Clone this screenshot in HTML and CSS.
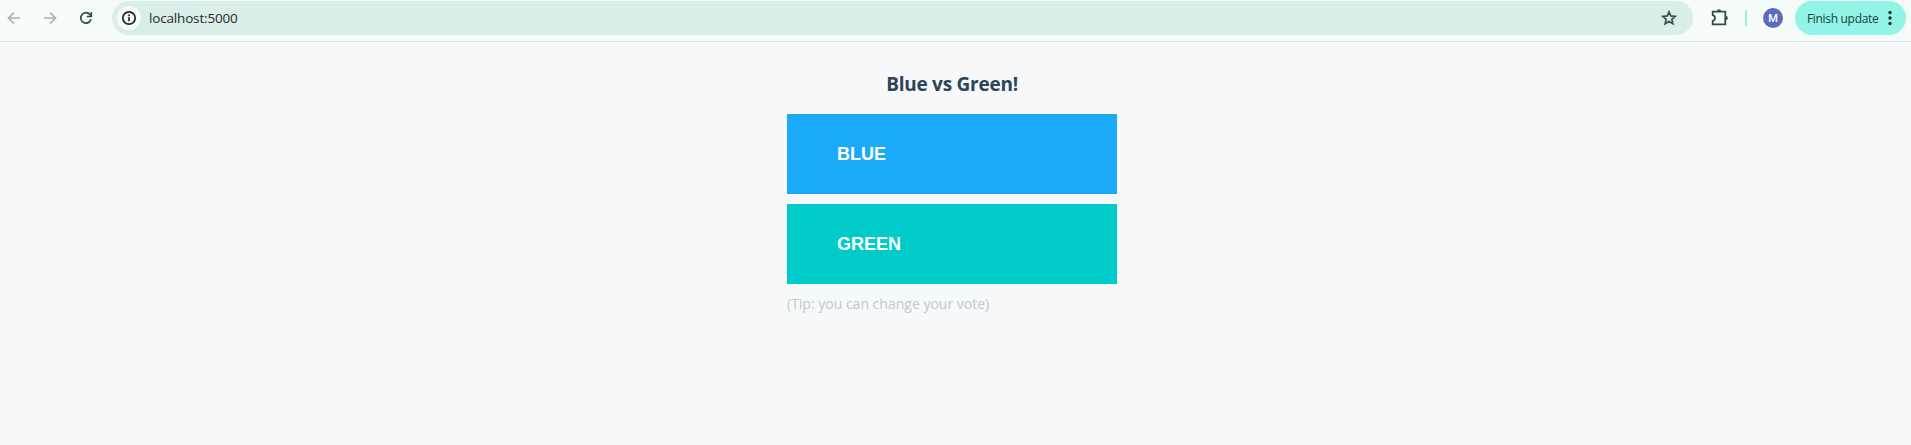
FILE: index.html
```html
<!DOCTYPE html>
<html lang="en">
<head>
<meta charset="utf-8">
<title>Blue vs Green!</title>
<link rel="stylesheet" href="styles.css">
</head>
<body>
<header class="toolbar">
  <nav class="nav">
    <svg class="icon muted" viewBox="0 0 16 16"><path d="M14 8H3M8 2.500 2.500 8 8 13.500"/></svg>
    <svg class="icon muted" viewBox="0 0 16 16"><path d="M2 8h11M8 2.500 13.500 8 8 13.500"/></svg>
    <svg class="icon" viewBox="0 0 16 16"><path d="M13 9.200A5.200 5.200 0 1 1 11.900 4.500L13.300 6"/><path d="M13.300 2v4.500H8.800"/></svg>
  </nav>
  <div class="address">
    <span class="site-info"><svg class="icon dark" viewBox="0 0 16 16"><circle cx="8" cy="8" r="6.200"/><path d="M8 7.300v4M8 4.500v1.700"/></svg></span>
    <span class="url">localhost:5000</span>
    <svg class="icon star" viewBox="0 0 16 16"><path d="m8 1.800 1.750 4.150 4.550.4-3.450 3 1.050 4.450L8 11.450 4.100 13.800l1.050-4.450-3.450-3 4.550-.4z"/></svg>
  </div>
  <svg class="puzzle" viewBox="0 0 18 18"><path d="M1.700 2.700h12.600v12.600H1.700v-3.400c3-.6 3-5.200 0-5.800z"/><path class="solid" d="M6 2a2 1.800 0 0 1 4 0zM15 7a1.800 2 0 0 1 0 4z"/></svg>
  <span class="divider"></span>
  <span class="avatar">M</span>
  <div class="update"><span class="update-label">Finish update</span><svg class="dots" viewBox="0 0 4 16"><circle cx="2" cy="2.500" r="1.700"/><circle cx="2" cy="8" r="1.700"/><circle cx="2" cy="13.500" r="1.700"/></svg></div>
</header>
<main class="poll">
  <h1 class="title">Blue vs Green!</h1>
  <button class="choice blue">BLUE</button>
  <button class="choice green">GREEN</button>
  <p class="tip">(Tip: you can change your vote)</p>
</main>
</body>
</html>
```
FILE: styles.css
```css
* { box-sizing: border-box; }
html { background: #f7f8fa; }
body {
  margin: 0;
  font-family: "Open Sans", sans-serif;
}
.toolbar {
  display: flex;
  align-items: center;
  height: 42px;
  padding: 1px 5px 6px 6px;
  background: #f4fbf9;
  border-bottom: 1px solid #d9e3e1;
}
.nav { display: flex; gap: 20px; width: 106px; }
.icon {
  display: block;
  width: 16px;
  height: 16px;
  fill: none;
  stroke: #304b48;
  stroke-width: 1.7;
}
.muted { stroke: #a9b1af; }
.dark { stroke: #1d2524; }
.address {
  display: flex;
  align-items: center;
  width: 1581px;
  height: 34px;
  padding: 0 16px 0 5px;
  border-radius: 17px;
  background: #daede8;
}
.site-info {
  display: grid;
  place-items: center;
  width: 24px;
  height: 24px;
  border-radius: 50%;
  background: #f4fbf9;
}
.url {
  margin-left: 8px;
  color: #1f2b2a;
  font-size: 13.500px;
  letter-spacing: -.17px;
  line-height: 18px;
}
.star { margin-left: auto; stroke: #40504e; }
.puzzle {
  width: 18px;
  height: 18px;
  margin-left: 18px;
  fill: none;
  stroke: #304b48;
  stroke-width: 1.8;
}
.solid { fill: #304b48; stroke: none; }
.divider { width: 2px; height: 16px; margin-left: 16px; background: #92f4e7; }
.avatar {
  display: grid;
  place-items: center;
  width: 20px;
  height: 20px;
  margin-left: 16px;
  border-radius: 50%;
  background: #5c6bc0;
  color: #fff;
  font: 500 11px Roboto, sans-serif;
}
.update {
  display: flex;
  align-items: center;
  justify-content: space-between;
  width: 111px;
  height: 34px;
  margin-left: auto;
  padding: 0 14px 0 12px;
  border-radius: 17px;
  background: #92f4e7;
}
.update-label {
  color: #17423d;
  font-size: 12px;
  letter-spacing: -.32px;
  white-space: nowrap;
}
.dots { width: 4px; height: 16px; fill: #17322f; }
.poll {
  display: flex;
  flex-direction: column;
  width: 330px;
  margin: 28px 0 0 787px;
}
.title {
  margin: 0 0 16px;
  color: #2c4358;
  font-size: 19px;
  font-weight: 700;
  letter-spacing: -.25px;
  line-height: 28px;
  text-align: center;
}
.choice {
  height: 80px;
  margin: 0 0 10px;
  padding: 0 0 0 50px;
  border: 0;
  color: #fff;
  font: bold 18px "Liberation Sans", Arial, sans-serif;
  text-align: left;
}
.blue { background: #1aaaf8; }
.green { background: #00cbca; }
.tip { margin: 0; color: #c0c9ce; font-size: 14px; line-height: 20px; }
```
